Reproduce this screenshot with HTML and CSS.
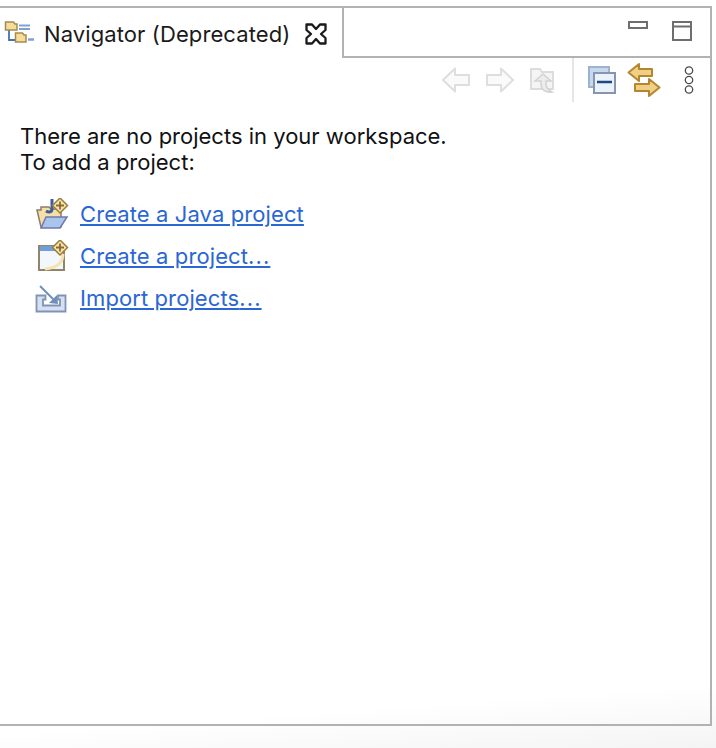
FILE: index.html
```html
<!DOCTYPE html>
<html lang="en">
<head>
<meta charset="utf-8">
<title>Navigator (Deprecated)</title>
<link rel="stylesheet" href="styles.css">
</head>
<body>
<main class="view">
  <header class="tabbar">
    <div class="tab">
      <svg class="tab-icon" width="30" height="24" viewBox="0 0 30 24">
        <path d="M5 9v11h7" fill="none" stroke="#3f73b8" stroke-width="1.800"/>
        <path d="M1.500 2h8l1.500 2h2v6H1.500z" fill="#f5dc98" stroke="#a58a50" stroke-width="1.500"/>
        <path d="M11.500 13h7l1.500 2h2v7h-10.500z" fill="#f5dc98" stroke="#a58a50" stroke-width="1.500"/>
        <path d="M15 5.500h11M15 9h11" stroke="#7fa3d0" stroke-width="1.800"/>
        <path d="M24 19.500h6" stroke="#7fa3d0" stroke-width="2.500"/>
      </svg>
      <span class="tab-label">Navigator (Deprecated)</span>
      <svg class="tab-close" width="24" height="24" viewBox="0 0 24 24">
        <path d="M2.500 2.500H8L12 7 16 2.500H21.500V8L17 12 21.500 16V21.500H16L12 17 8 21.500H2.500V16L7 12 2.500 8Z" fill="none" stroke="#1a1a1a" stroke-width="2.300" stroke-linejoin="round"/>
      </svg>
    </div>
    <div class="tab-rest">
      <svg class="win-min" width="20" height="8" viewBox="0 0 20 8"><rect x="1" y="1" width="18" height="6" fill="#fff" stroke="#6e6e6e" stroke-width="2"/></svg>
      <svg class="win-max" width="20" height="20" viewBox="0 0 20 20"><rect x="1" y="1" width="18" height="18" fill="#fff" stroke="#6e6e6e" stroke-width="2"/><path d="M1 5.500h18" stroke="#6e6e6e" stroke-width="2"/></svg>
    </div>
  </header>
  <div class="toolbar">
    <svg class="tool back" width="30" height="26" viewBox="0 0 30 26"><path d="M14 1.500 2 13l12 11.500V18h14V8H14z" fill="#fafafa" stroke="#dedede" stroke-width="2" stroke-linejoin="round"/></svg>
    <svg class="tool fwd" width="30" height="26" viewBox="0 0 30 26"><path d="M16 1.500 28 13 16 24.500V18H2V8h14z" fill="#fafafa" stroke="#dedede" stroke-width="2" stroke-linejoin="round"/></svg>
    <svg class="tool up" width="26" height="28" viewBox="0 0 26 28">
      <path d="M2 23V3h9l2 3h11v17H2z" fill="#f4f4f4" stroke="#dcdcdc" stroke-width="2"/>
      <path d="M14 8l8 7h-5v3c0 4 2 6 6 8-6 1-11-2-11-8v-3H6z" fill="#ececec" stroke="#d2d2d2" stroke-width="1.500"/>
    </svg>
    <span class="sep"></span>
    <svg class="tool collapse" width="28" height="28" viewBox="0 0 28 28">
      <rect x="1" y="1" width="20" height="20" fill="#c5d8ee" stroke="#9db2cf" stroke-width="2"/>
      <rect x="6" y="7" width="21" height="20" fill="#eaf2fb" stroke="#8795ae" stroke-width="2"/>
      <path d="M9 16h15" stroke="#1f4a80" stroke-width="2.500"/>
    </svg>
    <svg class="tool link" width="34" height="34" viewBox="0 0 34 34">
      <path d="M12 1 1.500 9.500 12 18v-5h13V6H12z" fill="#efd084" stroke="#b5862f" stroke-width="2" stroke-linejoin="round"/>
      <path d="M22 16l10.500 8.500L22 33v-5H8v-7h14z" fill="#efd084" stroke="#b5862f" stroke-width="2" stroke-linejoin="round"/>
    </svg>
    <svg class="tool more" width="10" height="28" viewBox="0 0 10 28">
      <circle cx="5" cy="4.500" r="3.700" fill="none" stroke="#4a4a4a" stroke-width="1.300"/>
      <circle cx="5" cy="14" r="3.700" fill="none" stroke="#4a4a4a" stroke-width="1.300"/>
      <circle cx="5" cy="23.500" r="3.700" fill="none" stroke="#4a4a4a" stroke-width="1.300"/>
    </svg>
  </div>
  <section class="content">
    <p class="intro">There are no projects in your workspace.<br>To add a project:</p>
    <ul class="actions">
      <li class="action">
        <svg width="34" height="32" viewBox="0 0 34 32">
          <path d="M2 12h4V9h8l2 2h10v18H6z" fill="#f6dfa6" stroke="#8a7d6a" stroke-width="1.500"/>
          <path d="M6 30l5-11h21l-7 11z" fill="#a9c5ec" stroke="#6f78b0" stroke-width="1.500"/>
          <path d="M17 1v10c0 3-3 4-6 2" fill="none" stroke="#3b5f96" stroke-width="3"/>
          <path d="M25 0l7.500 7.500-7.500 7.500-7.500-7.500z" fill="#f6e3b0" stroke="#9a7d3c" stroke-width="1.500"/>
          <path d="M25 3.500v8M21 7.500h8" stroke="#8a6c2c" stroke-width="1.800"/>
        </svg>
        <a href="#">Create a Java project</a>
      </li>
      <li class="action">
        <svg width="34" height="32" viewBox="0 0 34 32">
          <rect x="4" y="6" width="25" height="24" fill="#f2f7fe" stroke="#8f8569" stroke-width="2"/>
          <rect x="5" y="6" width="23" height="5" fill="#6f9fd6"/>
          <path d="M28 14c0 9-7 14-18 15" fill="none" stroke="#f5e4ae" stroke-width="3"/>
          <path d="M25 0l7.500 7.500-7.500 7.500-7.500-7.500z" fill="#f6e3b0" stroke="#9a7d3c" stroke-width="1.500"/>
          <path d="M25 3.500v8M21 7.500h8" stroke="#8a6c2c" stroke-width="1.800"/>
        </svg>
        <a href="#">Create a project<span class="dots">...</span></a>
      </li>
      <li class="action">
        <svg width="34" height="32" viewBox="0 0 34 32">
          <path d="M1.500 13.500h9v4H8v6h17v-6h-2v-4h7.500v16H1.500z" fill="#d5e1f0" stroke="#8093b5" stroke-width="1.800"/>
          <path d="M5 4l15 15" stroke="#6d8fbb" stroke-width="2"/>
          <path d="M23 22l-9-1 8-8z" fill="#6d8fbb"/>
        </svg>
        <a href="#">Import projects<span class="dots">...</span></a>
      </li>
    </ul>
  </section>
</main>
</body>
</html>
```
FILE: styles.css
```css
* { box-sizing: border-box; }
html, body { margin: 0; height: 748px; overflow: hidden; }
body {
  background: linear-gradient(176deg, #ffffff 92%, #f4f4f4 100%);
  font-family: Inter, "Liberation Sans", sans-serif;
  color: #111;
  padding-top: 6px;
}
.view {
  width: 712px;
  height: 720px;
  border-top: 2px solid #b2b2b2;
  border-right: 2px solid #b2b2b2;
  border-bottom: 2px solid #b2b2b2;
  display: flex;
  flex-direction: column;
}
.tabbar { display: flex; height: 50px; flex: none; }
.tab {
  width: 344px;
  border-right: 2px solid #b2b2b2;
  display: flex;
  align-items: center;
  padding-left: 4px;
}
.tab-icon { flex: none; margin-top: -2px; }
.tab-label { font-size: 22px; letter-spacing: 0.1px; margin-left: 10px; white-space: nowrap; color: #1a1a1a; padding-top: 1px; }
.tab-close { flex: none; margin-left: 14px; margin-top: 2px; }
.tab-rest {
  flex: 1;
  border-bottom: 2px solid #b2b2b2;
  display: flex;
  align-items: flex-start;
  justify-content: flex-end;
  gap: 24px;
  padding: 13px 18px 0 0;
}
.toolbar {
  height: 44px;
  flex: none;
  display: flex;
  align-items: center;
  padding-right: 16px;
  justify-content: flex-end;
}
.tool { flex: none; }
.fwd { margin-left: 14px; }
.up { margin-left: 14px; }
.sep { width: 2px; height: 44px; background: #e6e6e6; margin: 0 14px 0 17px; }
.link { margin-left: 11px; }
.more { margin-left: 23px; }
.content { padding: 21px 0 0 20px; }
.intro { margin: 0; font-size: 22px; line-height: 26px; color: #111; }
.actions { list-style: none; margin: 18px 0 0; padding: 0 0 0 15px; display: flex; flex-direction: column; }
.action { height: 42px; display: flex; align-items: center; gap: 11px; }
.action a { color: #2a66d4; font-size: 22px; letter-spacing: 0.1px; text-decoration: underline; }
.dots { letter-spacing: 1.1px; }
```
